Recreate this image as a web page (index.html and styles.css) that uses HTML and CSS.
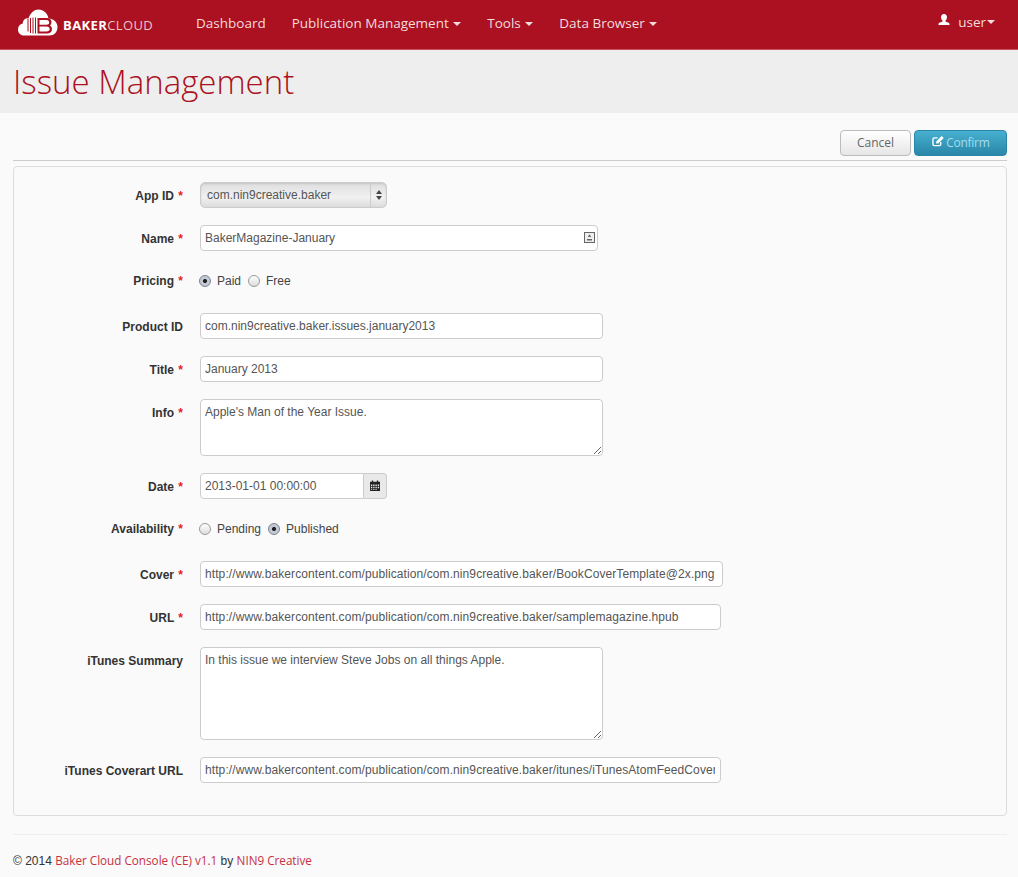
FILE: index.html
```html
<!DOCTYPE html>
<html lang="en">
<head>
    <meta charset="UTF-8">
    <title>Issue Management</title>
    <link rel="stylesheet" href="styles.css">
</head>
<body>
    <nav class="navbar">
        <a class="brand" href="#">
            <svg class="brand-icon" width="40" height="27" viewBox="0 0 40 27">
                <path fill="#fff" d="M6 26.500C2.500 26.500 0 24 0 20.500C0 17.300 2 15 4.800 14.500C4.800 11 7.500 8.700 10.500 9.300C12.500 3.500 16.500 0.500 20.500 0.500C25.500 0.500 29.500 4 30.500 9.500C35.500 9.500 39.500 13.500 39.500 18C39.500 23 36 26.500 31.500 26.500Z"/>
                <path fill="#ab1120" d="M9.500 9.500H10.500V23L9.500 22ZM12 9H13V24H12ZM14.500 8.500H15.500V24.500H14.500ZM17 8.500H18V24.500H17Z"/>
                <path fill="#ab1120" fill-rule="evenodd" d="M19.500 9H29C32 9 33.500 11 33.500 13.200C33.500 14.800 32.800 15.900 31.800 16.500C33.200 17.100 34 18.500 34 20C34 22.800 32 24.500 29 24.500H19.500ZM21.500 11V15.700H28.500C30.200 15.700 31.200 14.700 31.200 13.400C31.200 12 30.200 11 28.500 11ZM21.500 17.600V22.500H28.500C30.500 22.500 31.700 21.500 31.700 20.100C31.700 18.600 30.500 17.600 28.500 17.600Z"/>
            </svg>
            <span class="brand-text"><b>BAKER</b>CLOUD</span>
        </a>
        <ul class="nav-links">
            <li><a href="#">Dashboard</a></li>
            <li><a href="#">Publication Management <i class="caret"></i></a></li>
            <li><a href="#">Tools <i class="caret"></i></a></li>
            <li><a href="#">Data Browser <i class="caret"></i></a></li>
        </ul>
        <a class="user-menu" href="#">
            <svg width="12" height="12" viewBox="0 0 12 12"><path fill="#fff" d="M6 0C7.900 0 9 1.300 9 3.200C9 4.800 8.200 6 7.500 6.600V7.600C8.800 8.100 11.500 8.700 11.500 10V11H0.500V10C0.500 8.700 3.200 8.100 4.500 7.600V6.600C3.800 6 3 4.800 3 3.200C3 1.300 4.100 0 6 0Z"/></svg>
            <span>user</span><i class="caret"></i>
        </a>
    </nav>

    <header class="page-header">
        <h1>Issue Management</h1>
    </header>

    <main class="content">
        <div class="actions">
            <button type="button" class="btn">Cancel</button>
            <button type="button" class="btn btn-primary">
                <svg width="12" height="11" viewBox="0 0 13 12"><path fill="none" stroke="#fff" stroke-width="1.500" d="M9.500 6.500V9C9.500 10 9 10.500 8 10.500H2.500C1.500 10.500 1 10 1 9V3.500C1 2.500 1.500 2 2.500 2H6"/><path fill="#fff" d="M10.500 0L12.800 2.300L6.800 8.200H4.500V5.900Z"/></svg>
                Confirm
            </button>
        </div>

        <form class="panel">
            <label class="field-label">App ID <em>*</em></label>
            <div class="select-box">
                <span class="select-value">com.nin9creative.baker</span>
                <span class="select-arrows"><i class="arrow-up"></i><i class="arrow-down"></i></span>
            </div>

            <label class="field-label">Name <em>*</em></label>
            <div class="input-wrap w-name">
                <input type="text" class="input" value="BakerMagazine-January">
                <svg class="contact-icon" width="11" height="11" viewBox="0 0 11 11"><rect x="0.500" y="0.500" width="10" height="10" fill="#eee" stroke="#666"/><path fill="#666" d="M5.500 2.200L7.200 5H3.800ZM3 7H8V8.500H3Z"/></svg>
            </div>

            <label class="field-label radio-label">Pricing <em>*</em></label>
            <div class="radios">
                <span class="radio checked"></span><span class="radio-text">Paid</span>
                <span class="radio"></span><span class="radio-text">Free</span>
            </div>

            <label class="field-label">Product ID</label>
            <input type="text" class="input w-wide" value="com.nin9creative.baker.issues.january2013">

            <label class="field-label">Title <em>*</em></label>
            <input type="text" class="input w-wide" value="January 2013">

            <label class="field-label">Info <em>*</em></label>
            <textarea class="input w-wide h-info">Apple's Man of the Year Issue.</textarea>

            <label class="field-label">Date <em>*</em></label>
            <div class="date-group">
                <input type="text" class="input date-input" value="2013-01-01 00:00:00">
                <span class="date-addon">
                    <svg width="10" height="11" viewBox="0 0 11 12"><path fill="#222" fill-rule="evenodd" d="M0 2H2V0.500H3.500V2H7.500V0.500H9V2H11V12H0ZM1 5V6.500H2.500V5ZM3.500 5V6.500H5V5ZM6 5V6.500H7.500V5ZM8.500 5V6.500H10V5ZM1 7.500V9H2.500V7.500ZM3.500 7.500V9H5V7.500ZM6 7.500V9H7.500V7.500ZM8.500 7.500V9H10V7.500ZM3.500 10V11H5V10ZM6 10V11H7.500V10ZM1 10V11H2.500V10Z"/></svg>
                </span>
            </div>

            <label class="field-label radio-label">Availability <em>*</em></label>
            <div class="radios">
                <span class="radio"></span><span class="radio-text">Pending</span>
                <span class="radio checked"></span><span class="radio-text">Published</span>
            </div>

            <label class="field-label">Cover <em>*</em></label>
            <input type="text" class="input w-cover url-input" value="http://www.bakercontent.com/publication/com.nin9creative.baker/BookCoverTemplate@2x.png">

            <label class="field-label">URL <em>*</em></label>
            <input type="text" class="input w-url url-input" value="http://www.bakercontent.com/publication/com.nin9creative.baker/samplemagazine.hpub">

            <label class="field-label">iTunes Summary</label>
            <textarea class="input w-wide h-summary">In this issue we interview Steve Jobs on all things Apple.</textarea>

            <label class="field-label">iTunes Coverart URL</label>
            <input type="text" class="input w-url url-input" value="http://www.bakercontent.com/publication/com.nin9creative.baker/itunes/iTunesAtomFeedCover.png">
        </form>

        <footer class="footer">
            © 2014 <a href="#">Baker Cloud Console (CE) v1.1</a> by <a href="#">NIN9 Creative</a>
        </footer>
    </main>
</body>
</html>
```

FILE: styles.css
```css
* {
    box-sizing: border-box;
}
body {
    margin: 0;
    background-color: #fafafa;
    color: #333;
    font-family: "Open Sans", sans-serif;
}
a {
    text-decoration: none;
}

/* navbar */
.navbar {
    display: flex;
    align-items: center;
    height: 50px;
    padding: 0 23px 6px 18px;
    background-color: #ab1120;
    border-bottom: 1px solid #c9545f;
}
.brand {
    display: flex;
    align-items: center;
    width: 178px;
    color: #fff;
}
.brand-icon {
    margin: 1px 5px 0 0;
}
.brand-text {
    margin-top: 7px;
    font-size: 13px;
    color: #e8c5c9;
    letter-spacing: 0.4px;
}
.brand-text b {
    color: #fff;
}
.nav-links {
    display: flex;
    flex: 1;
    gap: 26px;
    margin: 0;
    padding: 0;
    list-style: none;
}
.nav-links a, .user-menu {
    color: #f3dcde;
    font-size: 13.500px;
}
.caret {
    display: inline-block;
    width: 0;
    height: 0;
    margin-left: 1px;
    vertical-align: middle;
    border-top: 4px solid #f3dcde;
    border-left: 4px solid transparent;
    border-right: 4px solid transparent;
}
.user-menu {
    display: flex;
    align-items: center;
}
.user-menu svg {
    margin: -3px 8px 0 0;
}

/* page title */
.page-header {
    height: 63px;
    padding: 10px 13px 0;
    background-color: #eee;
}
.page-header h1 {
    margin: 0;
    color: #ab1120;
    font-size: 33px;
    font-weight: 300;
    line-height: 44px;
}

.content {
    padding: 17px 11px 0 13px;
}
.actions {
    display: flex;
    justify-content: flex-end;
    gap: 3px;
    height: 31px;
    border-bottom: 1px solid #ccc;
}
.btn {
    height: 26px;
    width: 71px;
    padding: 0 0 2px;
    background: linear-gradient(#fff, #e6e6e6);
    border: 1px solid #bbb;
    border-radius: 4px;
    color: #666;
    font-family: "Open Sans", sans-serif;
    font-size: 12px;
}
.btn-primary {
    width: 93px;
    background: linear-gradient(#46b0d0, #2a86a8);
    border-color: #2a86a8;
    color: #a5dcec;
    letter-spacing: -0.3px;
}

/* form */
.panel {
    display: grid;
    grid-template-columns: 169px 1fr;
    gap: 17px;
    align-items: start;
    align-content: start;
    height: 650px;
    margin-top: 5px;
    padding: 15px 0 0;
    background-color: #fafafa;
    border: 1px solid #ddd;
    border-radius: 4px;
}
.field-label {
    padding-top: 7px;
    color: #333;
    font-family: "Liberation Sans", sans-serif;
    font-size: 12px;
    font-weight: bold;
    line-height: 14px;
    text-align: right;
}
.field-label em {
    margin-left: 1px;
    color: #e01b2b;
    font-style: normal;
}
.radio-label {
    padding-top: 6px;
}
.input {
    display: block;
    height: 26px;
    padding: 0 5px 0 4px;
    background-color: #fff;
    border: 1px solid #ccc;
    border-radius: 4px;
    color: #555;
    font-family: "Liberation Sans", sans-serif;
    font-size: 12px;
}
.url-input {
    letter-spacing: 0.09px;
}
textarea.input {
    padding-top: 5px;
    line-height: 14px;
}
.w-name {
    width: 398px;
}
.w-wide {
    width: 403px;
}
.w-cover {
    width: 523px;
}
.w-url {
    width: 521px;
}
.h-info {
    height: 57px;
}
.h-summary {
    height: 93px;
}
.input-wrap {
    position: relative;
}
.input-wrap .input {
    width: 100%;
}
.contact-icon {
    position: absolute;
    top: 7px;
    right: 3px;
}
.select-box {
    display: flex;
    width: 187px;
    height: 26px;
    background: linear-gradient(#dedede, #f1f1f1 60%, #dcdcdc);
    border: 1px solid #ccc;
    border-radius: 5px;
    box-shadow: inset 0 1px 2px rgba(0, 0, 0, 0.12);
    color: #555;
    font-family: "Liberation Sans", sans-serif;
    font-size: 12px;
    line-height: 24px;
}
.select-value {
    flex: 1;
    padding-left: 6px;
}
.select-arrows {
    display: flex;
    flex-direction: column;
    align-items: center;
    justify-content: center;
    gap: 2px;
    width: 16px;
    border-left: 1px solid #ccc;
}
.arrow-up, .arrow-down {
    width: 0;
    height: 0;
    border-left: 3px solid transparent;
    border-right: 3px solid transparent;
}
.arrow-up {
    border-bottom: 4px solid #444;
}
.arrow-down {
    border-top: 4px solid #444;
}
.radios {
    display: flex;
    align-items: center;
    height: 28px;
    margin-left: -1px;
    padding-bottom: 2px;
    color: #444;
    font-family: "Liberation Sans", sans-serif;
    font-size: 12px;
}
.radio {
    width: 12px;
    height: 12px;
    margin-right: 6px;
    background: linear-gradient(#fff, #ddd);
    border: 1px solid #999;
    border-radius: 50%;
}
.radio.checked {
    background: radial-gradient(circle, #222 0, #222 1.800px, #c3cad6 2.300px);
    border-color: #7a8290;
}
.radio-text {
    margin-right: 7px;
}
.date-group {
    display: flex;
    width: 187px;
}
.date-input {
    width: 164px;
    border-radius: 4px 0 0 4px;
}
.date-addon {
    display: flex;
    align-items: center;
    justify-content: center;
    flex: 1;
    padding-bottom: 2px;
    background-color: #e9e9e9;
    border: 1px solid #ccc;
    border-left: 0;
    border-radius: 0 4px 4px 0;
}

.footer {
    margin-top: 18px;
    padding-top: 16px;
    border-top: 1px solid #eee;
    color: #333;
    font-family: "Liberation Sans", sans-serif;
    font-size: 12px;
    line-height: 18px;
}
.footer a {
    color: #c8303f;
    font-family: "Open Sans", sans-serif;
    font-size: 11.700px;
}
```
